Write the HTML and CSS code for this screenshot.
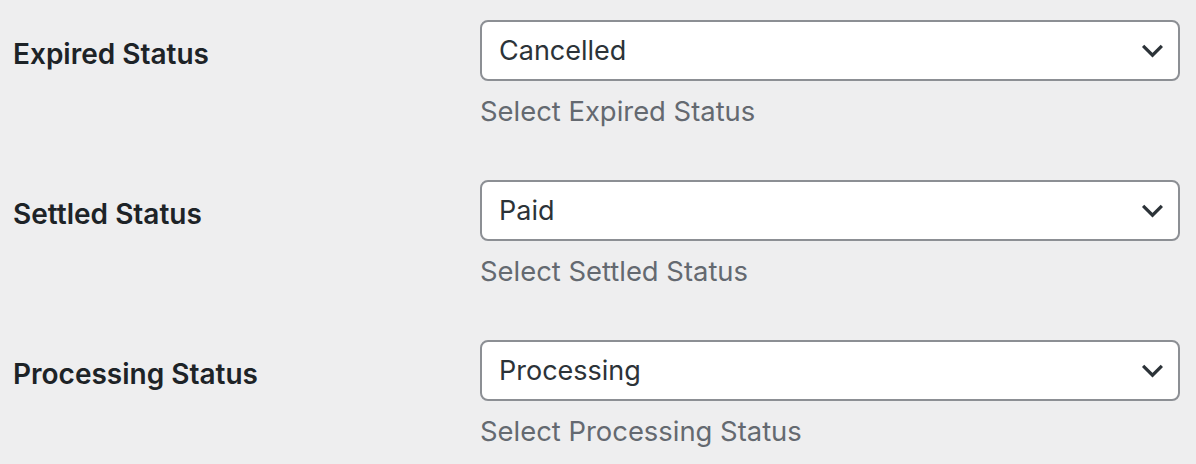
FILE: index.html
```html
<!DOCTYPE html>
<html lang="en">
<head>
    <meta charset="UTF-8">
    <title>Order Status Settings</title>
    <link rel="stylesheet" href="styles.css">
</head>
<body>
    <!-- Status settings table -->
    <div class="form-table">
        <div class="form-row">
            <label class="row-label" for="expiredStatus">Expired Status</label>
            <div class="row-field">
                <div class="select-wrap">
                    <select id="expiredStatus">
                        <option>Cancelled</option>
                        <option>Failed</option>
                    </select>
                    <svg class="chevron" viewBox="0 0 24 16" aria-hidden="true">
                        <polyline points="2,3 12,13 22,3" />
                    </svg>
                </div>
                <p class="description">Select Expired Status</p>
            </div>
        </div>

        <div class="form-row">
            <label class="row-label" for="settledStatus">Settled Status</label>
            <div class="row-field">
                <div class="select-wrap">
                    <select id="settledStatus">
                        <option>Paid</option>
                        <option>Completed</option>
                    </select>
                    <svg class="chevron" viewBox="0 0 24 16" aria-hidden="true">
                        <polyline points="2,3 12,13 22,3" />
                    </svg>
                </div>
                <p class="description">Select Settled Status</p>
            </div>
        </div>

        <div class="form-row">
            <label class="row-label" for="processingStatus">Processing Status</label>
            <div class="row-field">
                <div class="select-wrap">
                    <select id="processingStatus">
                        <option>Processing</option>
                        <option>On hold</option>
                    </select>
                    <svg class="chevron" viewBox="0 0 24 16" aria-hidden="true">
                        <polyline points="2,3 12,13 22,3" />
                    </svg>
                </div>
                <p class="description">Select Processing Status</p>
            </div>
        </div>
    </div>
</body>
</html>
```

FILE: styles.css
```css
/* Page background and base font */
body {
    margin: 0;
    padding: 0;
    background: #eeeeef;
    font-family: Inter, "Noto Sans", "Liberation Sans", sans-serif;
    color: #1d2327;
    overflow: hidden;
}

.form-table {
    display: flex;
    flex-direction: column;
    gap: 49px;
    padding: 20px 16px 0 13px;
}

/* One setting per row */
.form-row {
    display: grid;
    grid-template-columns: 467px 1fr;
}

.row-label {
    font-size: 28px;
    font-weight: 600;
    line-height: 36px;
    padding-top: 16px;
}

.row-field {
    display: flex;
    flex-direction: column;
}

/* Select box with chevron */
.select-wrap {
    position: relative;
    width: 700px;
}

.select-wrap select {
    appearance: none;
    -webkit-appearance: none;
    width: 100%;
    height: 61px;
    margin: 0;
    padding: 0 56px 0 17px;
    border: 2px solid #8c8f94;
    border-radius: 8px;
    background: #fff;
    font-family: inherit;
    font-size: 27px;
    color: #2c3338;
    outline: none;
}

.chevron {
    position: absolute;
    top: 23px;
    right: 16px;
    width: 23px;
    height: 15px;
    pointer-events: none;
}

.chevron polyline {
    fill: none;
    stroke: #2c3338;
    stroke-width: 3.4;
}

.description {
    margin: 10px 0 0 0;
    font-size: 27.4px;
    line-height: 40px;
    color: #646970;
}
```
